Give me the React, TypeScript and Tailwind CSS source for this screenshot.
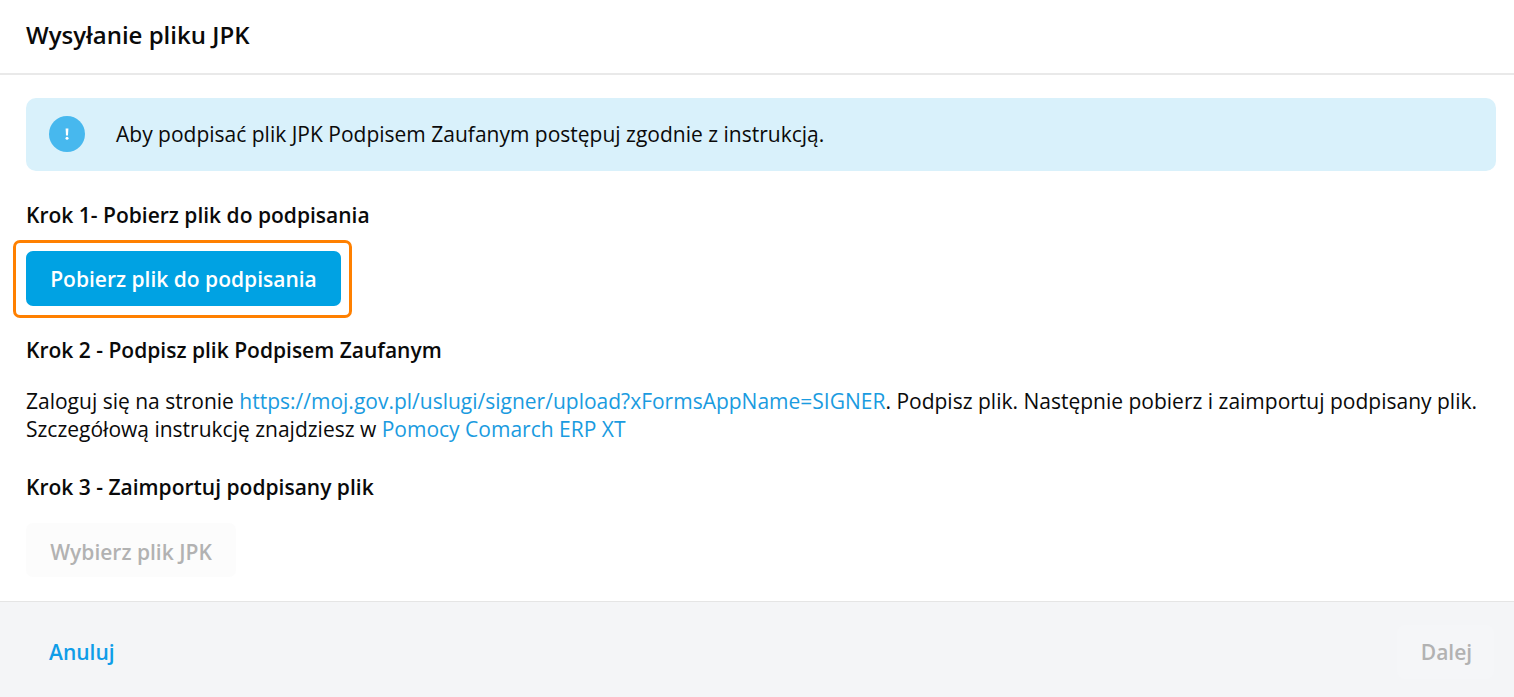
const FONT = "font-['Open_Sans',sans-serif]";

function AlertIcon() {
  return (
    <div className="w-9 h-9 rounded-full bg-[#47b8ee] flex items-center justify-center shrink-0">
      <svg width="4" height="12" viewBox="0 0 4 12" className="block">
        <path d="M0.6 0.5h2.8L3 7.6H1z" fill="#fff" />
        <circle cx="2" cy="10.2" r="1.5" fill="#fff" />
      </svg>
    </div>
  );
}

export default function App() {
  return (
    <div className={`${FONT} w-[1514px] h-[697px] bg-white text-[#0a0a0a] flex flex-col overflow-hidden`}>
      <header className="h-[75px] border-b-2 border-[#e9e9e9] px-[26px] flex items-center shrink-0">
        <h1 className="text-[24px] font-semibold leading-[30px] -mt-[3px]">Wysyłanie pliku JPK</h1>
      </header>

      <main className="flex-1 pl-[26px] pr-[18px]">
        <div className="mt-[23px] h-[73px] pb-[2px] rounded-[10px] bg-[#d9f1fb] flex items-center pl-[23px] gap-[31px]">
          <AlertIcon />
          <span className="text-[21px] leading-7">Aby podpisać plik JPK Podpisem Zaufanym postępuj zgodnie z instrukcją.</span>
        </div>

        <h2 className="mt-[30px] text-[21px] font-semibold leading-7">Krok 1- Pobierz plik do podpisania</h2>

        <div className="mt-[11px] -ml-[13px] w-[339px] h-[78px] border-[3px] border-[#ff8000] rounded-[7px] pl-[10px] pt-2">
          <button className="block w-[315px] h-[55px] pt-[2px] rounded-[7px] bg-[#00a2e3] text-white text-[21px] font-semibold">
            Pobierz plik do podpisania
          </button>
        </div>

        <h2 className="mt-[18px] text-[21px] font-semibold leading-7">Krok 2 - Podpisz plik Podpisem Zaufanym</h2>

        <p className="mt-[23px] text-[21px] leading-[28px]">
          Zaloguj się na stronie <a className="text-[#1a9be0]">https://moj.gov.pl/uslugi/signer/upload?xFormsAppName=SIGNER</a>. Podpisz plik. Następnie pobierz i zaimportuj podpisany plik.
          <br />
          Szczegółową instrukcję znajdziesz w <a className="text-[#1a9be0]">Pomocy Comarch ERP XT</a>
        </p>

        <h2 className="mt-[30px] text-[21px] font-semibold leading-7">Krok 3 - Zaimportuj podpisany plik</h2>

        <button className="block mt-[22px] w-[210px] h-[54px] pt-[6px] rounded-[7px] bg-[#fcfcfc] text-[#b2b2b2] text-[21px] font-semibold">
          Wybierz plik JPK
        </button>
      </main>

      <footer className="h-[96px] shrink-0 border-t border-[#e5e5e5] bg-[#f4f5f7] flex items-center justify-between pl-[49px] pr-[20px]">
        <a className="text-[21px] font-semibold text-[#0f9de8] mt-[7px]">Anuluj</a>
        <button className="w-[97px] h-[54px] mt-[5px] pt-[2px] pl-[2px] rounded-[7px] bg-[#f5f6f8] text-[#b2b2b2] text-[21px] font-semibold">Dalej</button>
      </footer>
    </div>
  );
}
